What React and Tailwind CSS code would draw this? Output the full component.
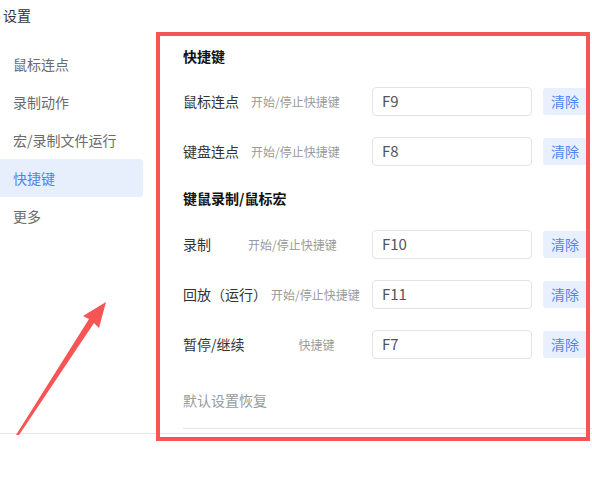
import React from 'react';

const menu = ['鼠标连点', '录制动作', '宏/录制文件运行', '快捷键', '更多'];

const HotkeyRow = ({ label, hint, hintGap, value, className = '' }) => (
  <div className={`flex items-center ${className}`}>
    <div className="flex w-[189px] shrink-0 items-center whitespace-nowrap">
      <span className="text-[14px] text-[#333]">{label}</span>
      <span className="text-[12px] text-[#9a9a9a]" style={{ marginLeft: hintGap }}>
        {hint}
      </span>
    </div>
    <div className="flex h-[29px] w-[160px] shrink-0 items-center rounded-[4px] border border-[#e3e3e3] pl-[9px] text-[15px] text-[#555]">
      {value}
    </div>
    <button
      type="button"
      className="ml-[11px] h-[27px] w-[44px] shrink-0 rounded-[3px] bg-[#e9f0fd] text-[14px] text-[#4d86f3]"
    >
      清除
    </button>
  </div>
);

const App = () => {
  return (
    <div
      className="relative h-[478px] w-[592px] overflow-hidden bg-white"
      style={{ fontFamily: '"Noto Sans CJK SC", "Noto Sans", sans-serif' }}
    >
      {/* title */}
      <div className="h-[45px] pl-[3px] pt-[5px] text-[14px] leading-[20px] text-[#333]">设置</div>

      <div className="flex h-[389px] border-b border-[#e6e6e6]">
        {/* sidebar */}
        <nav className="w-[143px] shrink-0">
          {menu.map((item) => {
            const active = item === '快捷键';
            return (
              <div
                key={item}
                className={
                  active
                    ? 'flex h-[38px] items-center rounded-r-[4px] bg-[#e8effc] pl-[13px] text-[14px] text-[#4f85f0]'
                    : 'flex h-[38px] items-center pl-[13px] text-[14px] text-[#6b6b6b]'
                }
              >
                {item}
              </div>
            );
          })}
        </nav>

        {/* content */}
        <section className="flex-1 pl-[40px] pt-[1px]">
          <h3 className="h-[20px] text-[14px] font-bold leading-[20px] text-[#111]">快捷键</h3>
          <HotkeyRow className="mt-[21px]" label="鼠标连点" hint="开始/停止快捷键" hintGap={12} value="F9" />
          <HotkeyRow className="mt-[21px]" label="键盘连点" hint="开始/停止快捷键" hintGap={12} value="F8" />

          <h3 className="mt-[22px] h-[20px] text-[14px] font-bold leading-[20px] text-[#111]">键鼠录制/鼠标宏</h3>
          <HotkeyRow className="mt-[22px]" label="录制" hint="开始/停止快捷键" hintGap={37} value="F10" />
          <HotkeyRow className="mt-[21px]" label="回放（运行）" hint="开始/停止快捷键" hintGap={4} value="F11" />
          <HotkeyRow className="mt-[21px]" label="暂停/继续" hint="快捷键" hintGap={54} value="F7" />

          <div className="mt-[31px] h-[20px] text-[14px] leading-[20px] text-[#9a9a9a]">默认设置恢复</div>
          <div className="mt-[18px] h-px bg-[#e6e6e6]" />
        </section>
      </div>

      {/* annotation: red frame */}
      <div className="pointer-events-none absolute left-[156px] top-[32px] h-[409px] w-[434px] border-4 border-[#f65555]" />

      {/* annotation: arrow */}
      <svg className="pointer-events-none absolute left-0 top-0" width="592" height="478" viewBox="0 0 592 478">
        <polygon points="16,435 89,319 83,316 106,302 99,328 94,323 19,435" fill="#f65555" />
      </svg>
    </div>
  );
};

export default App;
